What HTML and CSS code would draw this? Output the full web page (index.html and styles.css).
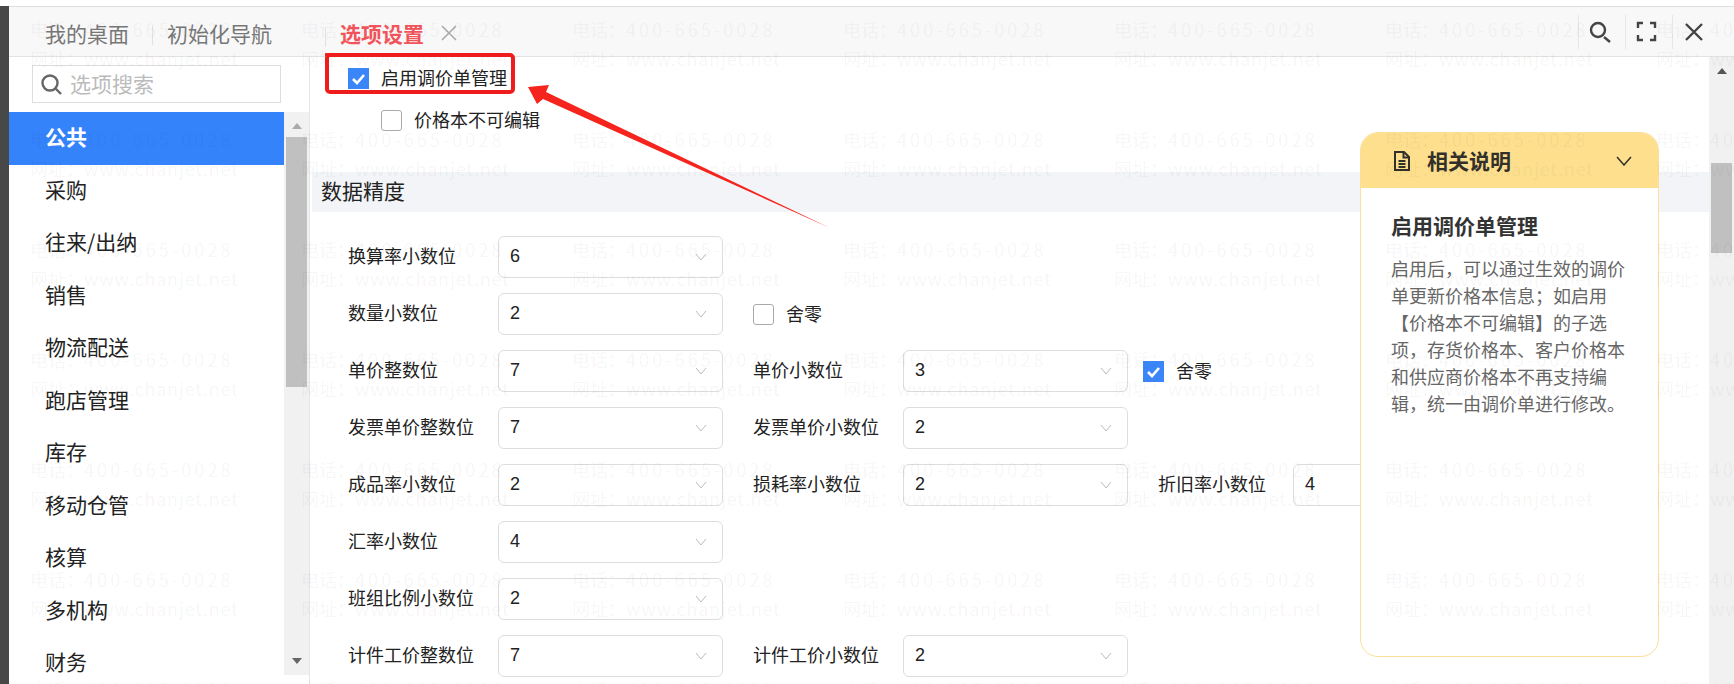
FILE: index.html
```html
<!DOCTYPE html>
<html lang="zh-CN">
<head>
    <meta charset="UTF-8">
    <title>选项设置</title>
    <link rel="stylesheet" href="styles.css">
</head>
<body>
    <div class="page">
        <div class="strip"></div>
        <div class="main">
            <div class="topbar">
                <div class="tabs">
                    <div class="tab tab-first">我的桌面</div>
                    <i class="tab-sep"></i>
                    <div class="tab tab-second">初始化导航</div>
                    <div class="tab tab-active">
                        <i class="tab-sep"></i>
                        <b>选项设置</b>
                        <svg class="tab-close" viewBox="0 0 16 16"><path d="M1 1L15 15M15 1L1 15"/></svg>
                    </div>
                </div>
                <div class="tools">
                    <div class="tool">
                        <svg viewBox="0 0 22 22"><circle cx="9" cy="9" r="7"/><path d="M15 16L21 21"/></svg>
                    </div>
                    <div class="tool">
                        <svg viewBox="0 0 22 22"><path d="M7 2H2V7M14 2H19V7M7 19H2V14M14 19H19V14"/></svg>
                    </div>
                    <div class="tool tool-last">
                        <svg viewBox="0 0 22 22"><path d="M3 3L19 19M19 3L3 19"/></svg>
                    </div>
                </div>
            </div>

            <div class="body-row">
                <div class="sidebar">
                    <div class="search">
                        <svg viewBox="0 0 22 22"><circle cx="10" cy="10" r="7.5"/><path d="M15.5 15.5L21 21"/></svg>
                        <span>选项搜索</span>
                    </div>
                    <div class="menu-wrap">
                        <ul class="menu">
                            <li class="active">公共</li>
                            <li>采购</li>
                            <li>往来/出纳</li>
                            <li>销售</li>
                            <li>物流配送</li>
                            <li>跑店管理</li>
                            <li>库存</li>
                            <li>移动仓管</li>
                            <li>核算</li>
                            <li>多机构</li>
                            <li>财务</li>
                        </ul>
                        <div class="scrollbar">
                            <div class="arrow arrow-up"></div>
                            <div class="thumb thumb-menu"></div>
                            <div class="arrow arrow-down"></div>
                        </div>
                    </div>
                </div>

                <div class="content">
                    <div class="opt opt-main">
                        <span class="check checked"><svg viewBox="0 0 21 21"><path d="M5 11L9 15L16 7"/></svg></span>
                        启用调价单管理
                    </div>
                    <div class="opt opt-sub">
                        <span class="check"></span>
                        价格本不可编辑
                    </div>

                    <div class="section">数据精度</div>

                    <div class="form">
                        <div class="form-row">
                            <label class="field-label">换算率小数位</label>
                            <div class="select">6<svg viewBox="0 0 12 8"><path d="M1 1L6 7L11 1"/></svg></div>
                        </div>
                        <div class="form-row">
                            <label class="field-label">数量小数位</label>
                            <div class="select">2<svg viewBox="0 0 12 8"><path d="M1 1L6 7L11 1"/></svg></div>
                            <div class="opt opt-inline">
                                <span class="check"></span>
                                舍零
                            </div>
                        </div>
                        <div class="form-row">
                            <label class="field-label">单价整数位</label>
                            <div class="select">7<svg viewBox="0 0 12 8"><path d="M1 1L6 7L11 1"/></svg></div>
                            <label class="field-label field-label-next">单价小数位</label>
                            <div class="select">3<svg viewBox="0 0 12 8"><path d="M1 1L6 7L11 1"/></svg></div>
                            <div class="opt opt-tight">
                                <span class="check checked"><svg viewBox="0 0 21 21"><path d="M5 11L9 15L16 7"/></svg></span>
                                舍零
                            </div>
                        </div>
                        <div class="form-row">
                            <label class="field-label">发票单价整数位</label>
                            <div class="select">7<svg viewBox="0 0 12 8"><path d="M1 1L6 7L11 1"/></svg></div>
                            <label class="field-label field-label-next">发票单价小数位</label>
                            <div class="select">2<svg viewBox="0 0 12 8"><path d="M1 1L6 7L11 1"/></svg></div>
                        </div>
                        <div class="form-row">
                            <label class="field-label">成品率小数位</label>
                            <div class="select">2<svg viewBox="0 0 12 8"><path d="M1 1L6 7L11 1"/></svg></div>
                            <label class="field-label field-label-next">损耗率小数位</label>
                            <div class="select">2<svg viewBox="0 0 12 8"><path d="M1 1L6 7L11 1"/></svg></div>
                            <label class="field-label field-label-next field-label-short">折旧率小数位</label>
                            <div class="select">4<svg viewBox="0 0 12 8"><path d="M1 1L6 7L11 1"/></svg></div>
                        </div>
                        <div class="form-row">
                            <label class="field-label">汇率小数位</label>
                            <div class="select">4<svg viewBox="0 0 12 8"><path d="M1 1L6 7L11 1"/></svg></div>
                        </div>
                        <div class="form-row">
                            <label class="field-label">班组比例小数位</label>
                            <div class="select">2<svg viewBox="0 0 12 8"><path d="M1 1L6 7L11 1"/></svg></div>
                        </div>
                        <div class="form-row">
                            <label class="field-label">计件工价整数位</label>
                            <div class="select">7<svg viewBox="0 0 12 8"><path d="M1 1L6 7L11 1"/></svg></div>
                            <label class="field-label field-label-next">计件工价小数位</label>
                            <div class="select">2<svg viewBox="0 0 12 8"><path d="M1 1L6 7L11 1"/></svg></div>
                        </div>
                    </div>

                    <div class="help">
                        <div class="help-head">
                            <svg class="help-doc" viewBox="0 0 18 22"><path d="M2 2H11L16 7V20H2Z"/><path d="M10.5 2V7.5H16M5.5 11H12.5M5.5 14H12.5M5.5 17H12.5"/></svg>
                            <b>相关说明</b>
                            <svg class="help-toggle" viewBox="0 0 16 10"><path d="M1 1L8 9L15 1"/></svg>
                        </div>
                        <div class="help-body">
                            <h4>启用调价单管理</h4>
                            <p>启用后，可以通过生效的调价单更新价格本信息；如启用【价格本不可编辑】的子选项，存货价格本、客户价格本和供应商价格本不再支持编辑，统一由调价单进行修改。</p>
                        </div>
                    </div>
                </div>

                <div class="scrollbar scrollbar-page">
                    <div class="arrow arrow-up arrow-dark"></div>
                    <div class="thumb thumb-page"></div>
                </div>
            </div>
        </div>

        <div class="watermark" id="watermark"></div>

        <svg class="annotation" viewBox="0 0 1734 684">
            <rect x="327" y="55" width="186" height="37" rx="3"/>
            <polygon points="528,87 549,85 546,92 830,228 543,99 537,104"/>
        </svg>
    </div>

    <script src="script.js"></script>
</body>
</html>
```

FILE: styles.css
```css
* {
    box-sizing: border-box;
}
body {
    margin: 0;
    background: white;
    font-family: "Noto Sans CJK SC", "Noto Sans", sans-serif;
    color: #222;
}
svg {
    fill: none;
    stroke: currentColor;
    flex-shrink: 0;
}
.page {
    position: relative;
    display: flex;
    width: 1734px;
    height: 684px;
    padding-top: 6px;
    overflow: hidden;
}
.strip {
    width: 9px;
    background-color: #484848;
}
.main {
    flex: 1;
    display: flex;
    flex-direction: column;
    min-width: 0;
}

/* top tabs */
.topbar {
    display: flex;
    justify-content: space-between;
    height: 51px;
    background-color: #f8f8f8;
    border-top: 1px solid #dedede;
    border-bottom: 1px solid #e3e3e3;
}
.tabs {
    display: flex;
    align-items: center;
    padding-left: 36px;
    font-size: 21px;
    color: #777;
}
.tab {
    display: flex;
    align-items: center;
    height: 49px;
    padding-top: 6px;
    border-bottom: 3px solid transparent;
}
.tab-first {
    padding-right: 23px;
}
.tab-second {
    padding-left: 14px;
    padding-right: 53px;
}
.tab-sep {
    display: block;
    width: 1px;
    height: 20px;
    margin-top: 7px;
    background-color: #e2e2e2;
}
.tab-active {
    width: 151px;
    border-bottom-color: #ee2a2a;
    color: #f2545b;
}
.tab-active b {
    margin-left: 14px;
}
.tab-close {
    width: 16px;
    height: 16px;
    margin-left: 17px;
    color: #aaa;
    stroke-width: 1.6;
}
.tools {
    display: flex;
    align-items: center;
}
.tool {
    display: flex;
    align-items: center;
    width: 47px;
    height: 34px;
    padding-left: 10px;
    border-left: 1px solid #e6e6e6;
    color: #444;
}
.tool svg {
    width: 22px;
    height: 22px;
    stroke-width: 2.4;
}
.tool-last {
    width: 62px;
}

.body-row {
    flex: 1;
    display: flex;
    min-height: 0;
}

/* left menu */
.sidebar {
    display: flex;
    flex-direction: column;
    width: 301px;
    padding-top: 8px;
    border-right: 1px solid #e6e6e6;
}
.search {
    display: flex;
    align-items: center;
    width: 249px;
    height: 38px;
    margin-left: 23px;
    padding-left: 7px;
    border: 1px solid #ddd;
    font-size: 21px;
    color: #bbb;
}
.search svg {
    width: 22px;
    height: 22px;
    margin-right: 8px;
    color: #666;
    stroke-width: 2.4;
}
.search span {
    margin-bottom: 2px;
}
.menu-wrap {
    display: flex;
    margin-top: 9px;
    height: 563px;
}
.menu {
    flex: 1;
    margin: 0;
    padding: 0;
    list-style: none;
    font-size: 21px;
}
.menu li {
    height: 52.5px;
    padding-left: 36px;
    line-height: 48px;
}
.menu li.active {
    background-color: #3483fb;
    color: white;
    font-weight: bold;
}
.scrollbar {
    display: flex;
    flex-direction: column;
    align-items: center;
    flex-shrink: 0;
    width: 25px;
    background-color: #f1f1f1;
}
.arrow {
    width: 0;
    height: 0;
    border-left: 5px solid transparent;
    border-right: 5px solid transparent;
}
.arrow-up {
    margin-top: 11px;
    border-bottom: 6px solid #aaa;
}
.arrow-dark {
    margin-top: 11px;
    border-bottom-color: #555;
}
.arrow-down {
    margin-top: auto;
    margin-bottom: 11px;
    border-top: 6px solid #666;
}
.thumb {
    width: 21px;
    background-color: #c0c0c0;
}
.thumb-menu {
    height: 250px;
    margin-top: 8px;
}
.thumb-page {
    height: 90px;
    margin-top: 89px;
}

/* options */
.content {
    position: relative;
    flex: 1;
    min-width: 0;
    overflow: hidden;
    font-size: 18px;
}
.opt {
    display: flex;
    align-items: center;
    gap: 12px;
    height: 42px;
    padding-bottom: 3px;
    flex-shrink: 0;
}
.opt-main {
    padding-left: 38px;
}
.opt-sub {
    padding-left: 71px;
}
.opt-inline {
    margin-left: 30px;
}
.opt-tight {
    margin-left: 15px;
}
.check {
    display: block;
    width: 21px;
    height: 21px;
    margin-top: 3px;
    border: 1px solid #aaa;
    border-radius: 3px;
    background: white;
}
.check.checked {
    border: none;
    border-radius: 0;
    background-color: #3a86f8;
    color: white;
}
.check svg {
    display: block;
    width: 21px;
    height: 21px;
    stroke-width: 2.6;
}
.section {
    height: 40px;
    margin: 31px 0 0 2px;
    padding-left: 9px;
    background-color: #f2f4f7;
    font-size: 21px;
    line-height: 36px;
}
.form {
    display: flex;
    flex-direction: column;
    gap: 15px;
    margin-top: 24px;
    padding-left: 38px;
}
.form-row {
    display: flex;
    align-items: center;
    height: 42px;
}
.field-label {
    width: 150px;
    padding-bottom: 4px;
    flex-shrink: 0;
}
.field-label-next {
    margin-left: 30px;
}
.field-label-short {
    width: 135px;
}
.select {
    display: flex;
    align-items: center;
    justify-content: space-between;
    flex-shrink: 0;
    width: 225px;
    height: 42px;
    padding: 0 15px 2px 11px;
    border: 1px solid #ddd;
    border-radius: 6px;
    background: white;
    font-family: "Liberation Sans", sans-serif;
}
.select svg {
    width: 12px;
    height: 8px;
    margin-top: 2px;
    color: #bbb;
    stroke-width: 1;
}

/* help panel, floats over the form */
.help {
    position: absolute;
    left: 1050px;
    top: 75px;
    width: 299px;
    height: 525px;
    background: white;
    border: 1px solid #fbdf9a;
    border-radius: 18px;
    overflow: hidden;
}
.help-head {
    display: flex;
    align-items: center;
    height: 55px;
    padding-left: 32px;
    background-color: #fddf8d;
    font-size: 21px;
    color: #33302a;
}
.help-head b {
    margin-bottom: 2px;
}
.help-doc {
    width: 18px;
    height: 22px;
    margin-right: 16px;
    stroke-width: 2;
}
.help-toggle {
    width: 16px;
    height: 10px;
    margin-left: auto;
    margin-right: 26px;
    stroke-width: 1.5;
}
.help-body {
    padding: 22px 30px 0 30px;
}
.help-body h4 {
    margin: 0;
    font-size: 21px;
    line-height: 30px;
    color: #333;
}
.help-body p {
    width: 236px;
    margin: 15px 0 0 0;
    font-size: 18px;
    line-height: 27px;
    color: #666;
}

/* overlays */
.watermark {
    position: absolute;
    left: 30px;
    top: 15px;
    display: grid;
    grid-template-columns: repeat(7, 271px);
    grid-auto-rows: 110px;
    pointer-events: none;
    font-size: 18px;
    line-height: 29px;
    color: rgba(0, 0, 0, 0.05);
    white-space: nowrap;
}
.wm-phone span {
    letter-spacing: 3.1px;
}
.wm-site span {
    letter-spacing: 0.8px;
}
.annotation {
    position: absolute;
    left: 0;
    top: 0;
    width: 1734px;
    height: 684px;
    pointer-events: none;
    stroke: none;
}
.annotation rect {
    fill: none;
    stroke: #ee1c1c;
    stroke-width: 4;
}
.annotation polygon {
    fill: #f5241c;
}
```

FILE: script.js
```js
// repeat the watermark tile over the whole page
const watermark = document.getElementById('watermark');
for (let i = 0; i < 49; i++) {
    watermark.innerHTML += `<div>
        <div class="wm-phone">电话：<span>400-665-0028</span></div>
        <div class="wm-site">网址：<span>www.chanjet.net</span></div>
    </div>`;
}
```
